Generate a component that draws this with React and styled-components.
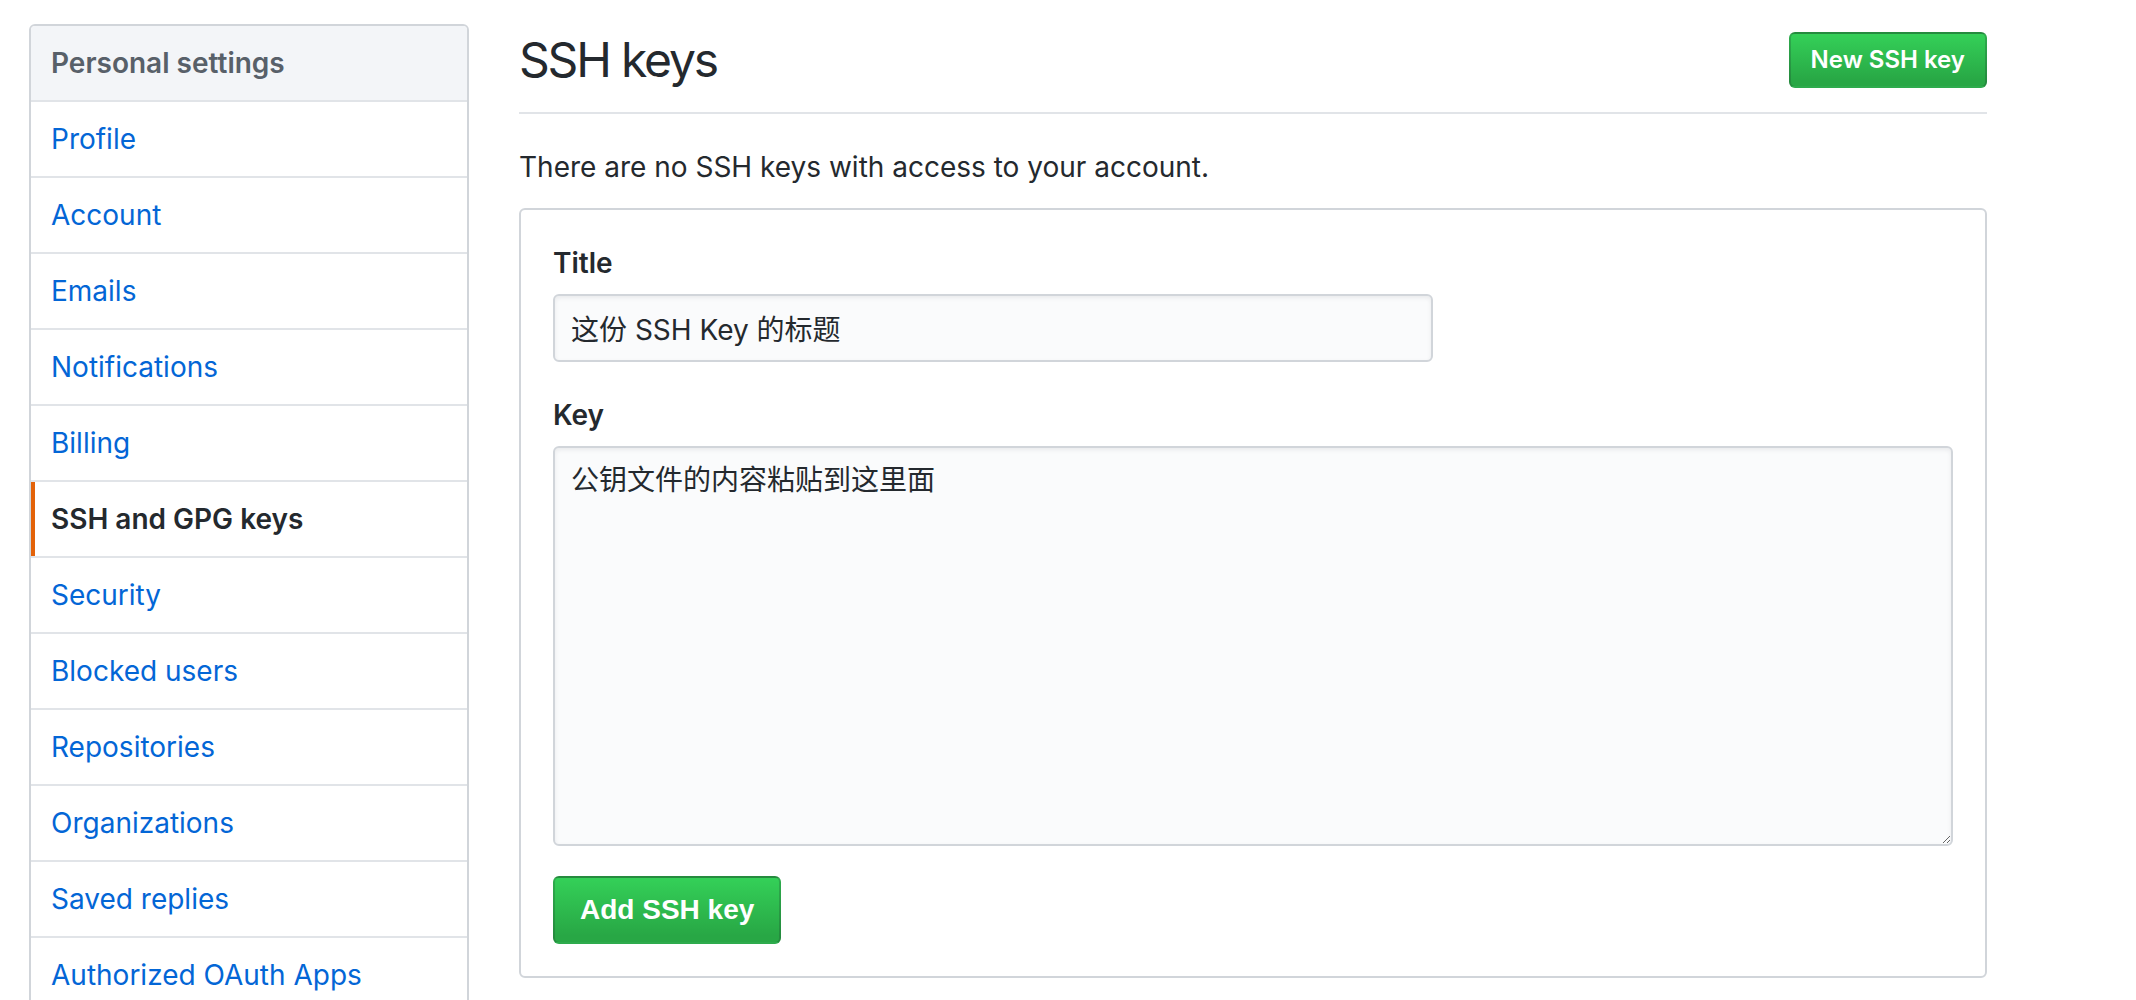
import React from "react";
import styled, { createGlobalStyle, css } from "styled-components";

const GlobalStyle = createGlobalStyle`
  html, body {
    margin: 0;
    padding: 0;
    background: #ffffff;
  }
  body {
    font-family: Inter, "Noto Sans CJK SC", sans-serif;
    font-size: 28px;
    line-height: 1.5;
    color: #24292e;
  }
  * { box-sizing: border-box; }
`;

const Page = styled.div`
  display: flex;
  align-items: flex-start;
  gap: 50px;
  padding: 24px 0 0 29px;
`;

const Sidebar = styled.nav`
  width: 440px;
  flex: none;
  border: 2px solid #d1d5da;
  border-radius: 6px;
  background: #ffffff;
  overflow: hidden;
`;

const MenuHeading = styled.div`
  padding: 16px 20px;
  background: #f3f5f8;
  border-bottom: 2px solid #e1e4e8;
  color: #586069;
  font-weight: 600;
  line-height: 42px;
`;

const MenuItem = styled.a`
  position: relative;
  display: block;
  padding: 16px 20px;
  line-height: 42px;
  border-bottom: 2px solid #e1e4e8;
  color: #0366d6;
  text-decoration: none;
  ${(p) =>
    p.$selected &&
    css`
      color: #24292e;
      font-weight: 600;
      &::before {
        content: "";
        position: absolute;
        left: 0;
        top: 0;
        bottom: 0;
        width: 4px;
        background: #e36209;
      }
    `}
`;

const Main = styled.main`
  width: 1468px;
  flex: none;
`;

const Subhead = styled.div`
  display: flex;
  align-items: flex-start;
  padding-bottom: 16px;
  margin-bottom: 32px;
  border-bottom: 2px solid #e1e4e8;
`;

const SubheadHeading = styled.h2`
  flex: 1;
  margin: 0;
  font-size: 48px;
  font-weight: 400;
  line-height: 72px;
  letter-spacing: -2.2px;
`;

const SubheadActions = styled.div`
  margin: 8px 0;
`;

const Button = styled.button`
  display: inline-block;
  border: 2px solid rgba(27, 31, 35, 0.2);
  border-radius: 6px;
  background-color: #28a745;
  background-image: linear-gradient(-180deg, #34d058 0%, #28a745 90%);
  color: #ffffff;
  font-family: Inter, sans-serif;
  font-weight: 600;
  line-height: 40px;
  cursor: pointer;
  ${(p) =>
    p.$small
      ? css`
          padding: 6px 20px;
          font-size: 24px;
        `
      : css`
          padding: 12px 25px;
          font-size: 28px;
          font-family: "Liberation Sans", Arial, sans-serif;
          font-weight: 700;
        `}
`;

const Lead = styled.p`
  margin: 0 0 20px;
  line-height: 42px;
`;

const FormBox = styled.form`
  border: 2px solid #d1d5da;
  border-radius: 6px;
  padding: 32px;
`;

const FormGroup = styled.div`
  margin: 32px 0 30px;
  &:first-child {
    margin-top: 0;
  }
`;

const Label = styled.label`
  display: block;
  margin-bottom: 10px;
  font-weight: 600;
  line-height: 42px;
`;

const fieldStyles = css`
  display: block;
  padding: 12px 16px;
  font-family: Inter, "Noto Sans CJK SC", sans-serif;
  font-size: 28px;
  line-height: 40px;
  color: #24292e;
  background: #fafbfc;
  border: 2px solid #d1d5da;
  border-radius: 6px;
  box-shadow: inset 0 2px 4px rgba(27, 31, 35, 0.075);
  outline: none;
`;

const TextInput = styled.input`
  ${fieldStyles}
  width: 880px;
  height: 68px;
`;

const TextArea = styled.textarea`
  ${fieldStyles}
  width: 100%;
  height: 400px;
  resize: vertical;
`;

const items = [
  "Profile",
  "Account",
  "Emails",
  "Notifications",
  "Billing",
  "SSH and GPG keys",
  "Security",
  "Blocked users",
  "Repositories",
  "Organizations",
  "Saved replies",
  "Authorized OAuth Apps",
];

export default function App() {
  return (
    <>
      <GlobalStyle />
      <Page>
        <Sidebar>
          <MenuHeading>Personal settings</MenuHeading>
          {items.map((it) => (
            <MenuItem key={it} href="#" $selected={it === "SSH and GPG keys"}>
              {it}
            </MenuItem>
          ))}
        </Sidebar>
        <Main>
          <Subhead>
            <SubheadHeading>SSH keys</SubheadHeading>
            <SubheadActions>
              <Button type="button" $small>
                New SSH key
              </Button>
            </SubheadActions>
          </Subhead>
          <Lead>There are no SSH keys with access to your account.</Lead>
          <FormBox onSubmit={(e) => e.preventDefault()}>
            <FormGroup>
              <Label htmlFor="title">Title</Label>
              <TextInput id="title" type="text" defaultValue="这份 SSH Key 的标题" />
            </FormGroup>
            <FormGroup>
              <Label htmlFor="key">Key</Label>
              <TextArea id="key" defaultValue="公钥文件的内容粘贴到这里面" />
            </FormGroup>
            <Button type="submit">Add SSH key</Button>
          </FormBox>
        </Main>
      </Page>
    </>
  );
}
